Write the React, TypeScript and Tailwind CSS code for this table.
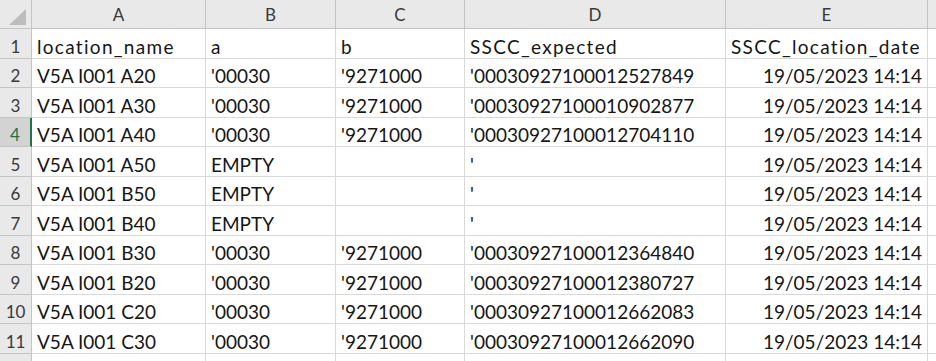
import type { ReactNode } from 'react';

const COLS = ['A', 'B', 'C', 'D', 'E'];
const WIDTHS = ['w-[174px]', 'w-[130px]', 'w-[129px]', 'w-[261px]', 'w-[202px]'];

const DATE = '19/05/2023 14:14';

const ROWS: string[][] = [
  ['location_name', 'a', 'b', 'SSCC_expected', 'SSCC_location_date'],
  ['V5A I001 A20', "'00030", "'9271000", "'00030927100012527849", DATE],
  ['V5A I001 A30', "'00030", "'9271000", "'00030927100010902877", DATE],
  ['V5A I001 A40', "'00030", "'9271000", "'00030927100012704110", DATE],
  ['V5A I001 A50', 'EMPTY', '', "'", DATE],
  ['V5A I001 B50', 'EMPTY', '', "'", DATE],
  ['V5A I001 B40', 'EMPTY', '', "'", DATE],
  ['V5A I001 B30', "'00030", "'9271000", "'00030927100012364840", DATE],
  ['V5A I001 B20', "'00030", "'9271000", "'00030927100012380727", DATE],
  ['V5A I001 C20', "'00030", "'9271000", "'00030927100012662083", DATE],
  ['V5A I001 C30', "'00030", "'9271000", "'00030927100012662090", DATE],
];

function Cell({ className, children }: { className?: string; children?: ReactNode }) {
  return (
    <div className={`shrink-0 flex items-end pb-[2px] border-r border-b border-[#d9d9d9] overflow-hidden whitespace-nowrap ${className ?? ''}`}>
      {children}
    </div>
  );
}

export default function App() {
  return (
    <div className="w-[936px] h-[361px] overflow-hidden bg-white text-[#161616] font-['Lato',sans-serif] text-[19px] leading-none">
      {/* column header */}
      <div className="flex h-[29px] bg-[#e9e9e9]">
        <div className="relative w-[32px] shrink-0 border-r border-b border-[#c4c4c4]">
          <svg className="absolute left-[9px] top-[9px]" width="17" height="16" viewBox="0 0 17 16">
            <polygon points="17,0 17,16 0,16" fill="#bdbdbd" />
          </svg>
        </div>
        {COLS.map((c, i) => (
          <div
            key={c}
            className={`${WIDTHS[i]} shrink-0 flex items-center justify-center border-r border-b border-[#c4c4c4] text-[17px] text-[#3a3a3a]`}
          >
            {c}
          </div>
        ))}
        <div className="flex-1 border-b border-[#c4c4c4]" />
      </div>

      {ROWS.map((r, ri) => {
        const active = ri === 3;
        return (
          <div key={ri} className={`flex ${ri % 2 === 0 ? 'h-[30px]' : 'h-[29px]'}`}>
            <div
              className={`w-[32px] shrink-0 flex items-end justify-center pb-[3px] border-b text-[17px] ${
                active
                  ? 'bg-[#d3d3d3] text-[#217346] border-r-2 border-r-[#217346] border-b-[#c4c4c4]'
                  : 'bg-[#e9e9e9] text-[#3a3a3a] border-r border-[#c4c4c4]'
              }`}
            >
              {ri + 1}
            </div>
            {r.map((v, ci) => (
              <Cell
                key={ci}
                className={`${WIDTHS[ci]} ${ci === 4 && ri > 0 ? 'justify-end pr-[5px]' : 'pl-[5px]'} ${ri === 0 ? 'tracking-[1.3px]' : ''}`}
              >
                {v}
              </Cell>
            ))}
            <div className="flex-1 border-b border-[#d9d9d9]" />
          </div>
        );
      })}

      {/* partial row 12 */}
      <div className="flex h-[10px]">
        <div className="w-[32px] shrink-0 bg-[#e9e9e9] border-r border-[#c4c4c4]" />
        {WIDTHS.map((w, i) => (
          <div key={i} className={`${w} shrink-0 border-r border-[#d9d9d9]`} />
        ))}
      </div>
    </div>
  );
}
